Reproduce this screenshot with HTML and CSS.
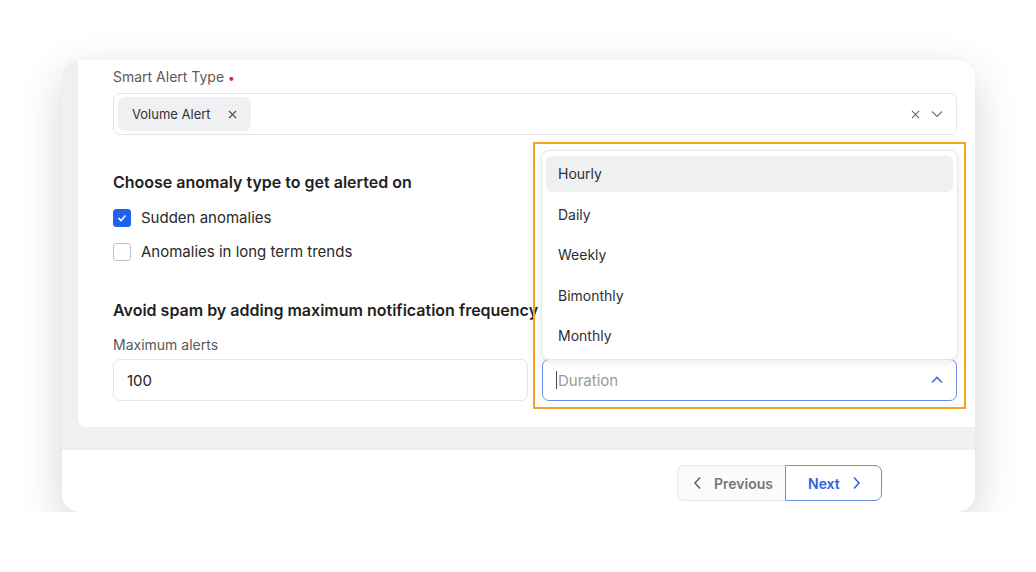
FILE: index.html
```html
<!DOCTYPE html>
<html lang="en">
<head>
    <meta charset="UTF-8">
    <meta name="viewport" content="width=device-width, initial-scale=1.0">
    <title>Smart Alert</title>
    <link rel="stylesheet" href="styles.css">
</head>
<body>
    <div class="frame">
        <div class="panel">
            <div class="field-label">Smart Alert Type <span class="required">&bull;</span></div>
            <div class="select">
                <span class="chip">Volume Alert
                    <svg width="9" height="9" viewBox="0 0 10 10"><path d="M1 1l8 8M9 1L1 9" stroke="#444" stroke-width="1.3" fill="none"/></svg>
                </span>
                <span class="select-icons">
                    <svg width="9" height="9" viewBox="0 0 10 10"><path d="M1 1l8 8M9 1L1 9" stroke="#666" stroke-width="1.2" fill="none"/></svg>
                    <svg width="12" height="8" viewBox="0 0 12 8"><path d="M1 1.5l5 5 5-5" stroke="#777" stroke-width="1.2" fill="none"/></svg>
                </span>
            </div>

            <h2 class="section-title first">Choose anomaly type to get alerted on</h2>
            <div class="checks">
                <label class="check">
                    <span class="box checked">
                        <svg width="10" height="8" viewBox="0 0 10 8"><path d="M1.5 4l2.5 2.5 4.5-5" stroke="#fff" stroke-width="1.6" fill="none"/></svg>
                    </span>
                    Sudden anomalies
                </label>
                <label class="check">
                    <span class="box"></span>
                    Anomalies in long term trends
                </label>
            </div>

            <h2 class="section-title">Avoid spam by adding maximum notification frequency</h2>
            <div class="field-label">Maximum alerts</div>
            <div class="input-row">
                <div class="input">100</div>
                <div class="input active">
                    <span class="caret"></span><span class="placeholder">Duration</span>
                    <svg class="up" width="12" height="8" viewBox="0 0 12 8"><path d="M1 6.5l5-5 5 5" stroke="#3f6fe0" stroke-width="1.6" fill="none"/></svg>
                </div>
            </div>

            <ul class="menu">
                <li class="hover">Hourly</li>
                <li>Daily</li>
                <li>Weekly</li>
                <li>Bimonthly</li>
                <li>Monthly</li>
            </ul>
            <div class="highlight"></div>
        </div>

        <div class="footer">
            <div class="pager">
                <button class="btn prev">
                    <svg width="9" height="14" viewBox="0 0 9 14"><path d="M7 1.5L2 7l5 5.5" stroke="#666" stroke-width="1.6" fill="none"/></svg>
                    Previous
                </button>
                <button class="btn next">
                    Next
                    <svg width="9" height="14" viewBox="0 0 9 14"><path d="M2 1.5L7 7l-5 5.5" stroke="#2f66e0" stroke-width="1.6" fill="none"/></svg>
                </button>
            </div>
        </div>
    </div>
</body>
</html>
```

FILE: styles.css
```css
body {
    margin: 0;
    background: #ffffff;
    font-family: 'Inter', 'Liberation Sans', sans-serif;
    color: #2a2a2a;
}

.frame {
    margin: 60px 0 0 62px;
    width: 913px;
    height: 452px;
    border-radius: 18px;
    overflow: hidden;
    background: #eff0f1;
    box-shadow: 0 14px 44px rgba(0, 0, 0, 0.17);
    display: flex;
    flex-direction: column;
}

.panel {
    position: relative;
    margin-left: 16px;
    height: 367px;
    box-sizing: border-box;
    padding: 8px 18px 0 35px;
    background: #ffffff;
    border-bottom-left-radius: 8px;
}

.field-label {
    font-size: 14px;
    line-height: 18px;
    color: #5a5a5a;
}

.required {
    color: #d6204b;
    font-size: 12px;
}

.select {
    margin-top: 6px;
    height: 42px;
    box-sizing: border-box;
    border: 1px solid #e4e5e6;
    border-radius: 7px;
    display: flex;
    align-items: center;
    justify-content: space-between;
    padding: 0 13px 0 4px;
}

.chip {
    display: flex;
    align-items: center;
    gap: 17px;
    height: 34px;
    padding: 0 14px;
    background: #eef0f1;
    border-radius: 7px;
    font-size: 13px;
    color: #333;
}

.select-icons {
    display: flex;
    align-items: center;
    gap: 11px;
}

.section-title {
    margin: 39px 0 0;
    font-size: 16px;
    line-height: 20px;
    font-weight: 600;
    color: #1f1f1f;
    white-space: nowrap;
}

.section-title.first {
    margin-top: 37px;
}

.checks {
    margin-top: 17px;
    display: flex;
    flex-direction: column;
    gap: 16px;
}

.check {
    display: flex;
    align-items: center;
    gap: 10px;
    font-size: 15px;
    line-height: 18px;
    color: #2a2a2a;
}

.box {
    width: 18px;
    height: 18px;
    box-sizing: border-box;
    border: 1px solid #bfc2c5;
    border-radius: 3px;
    display: flex;
    align-items: center;
    justify-content: center;
}

.box.checked {
    background: #1d63f0;
    border-color: #1d63f0;
}

.section-title + .field-label {
    margin-top: 16px;
}

.input-row {
    margin-top: 5px;
    display: flex;
    gap: 14px;
}

.input {
    flex: 1;
    height: 42px;
    box-sizing: border-box;
    border: 1px solid #e4e5e6;
    border-radius: 7px;
    display: flex;
    align-items: center;
    padding: 0 13px;
    font-size: 15px;
    color: #222;
}

.input.active {
    border-color: #6b8fe6;
    position: relative;
}

.caret {
    width: 1px;
    height: 18px;
    background: #444;
    margin-right: 1px;
}

.placeholder {
    color: #9a9a9a;
}

.up {
    margin-left: auto;
}

.menu {
    position: absolute;
    left: 463px;
    top: 90px;
    width: 417px;
    margin: 0;
    padding: 5px 4px;
    box-sizing: border-box;
    list-style: none;
    background: #ffffff;
    border: 1px solid #e6e7e8;
    border-radius: 8px;
    box-shadow: 0 2px 8px rgba(0, 0, 0, 0.08);
    display: flex;
    flex-direction: column;
    gap: 4.5px;
}

.menu li {
    height: 36px;
    line-height: 36px;
    padding-left: 12px;
    border-radius: 6px;
    font-size: 14px;
    color: #2e2e2e;
}

.menu li.hover {
    background: #eef0f1;
}

.highlight {
    position: absolute;
    left: 455px;
    top: 82px;
    width: 433px;
    height: 267px;
    box-sizing: border-box;
    border: 2px solid #f5a21f;
    pointer-events: none;
}

.footer {
    margin-top: 23px;
    flex: 1;
    background: #ffffff;
    display: flex;
    justify-content: flex-end;
    padding: 15px 93px 0 0;
}

.pager {
    display: flex;
    height: 36px;
}

.btn {
    font-family: inherit;
    font-size: 14px;
    font-weight: 600;
    display: flex;
    align-items: center;
    gap: 12px;
    background: #fbfbfb;
    border: 1px solid #e6e7e8;
    cursor: pointer;
}

.btn.prev {
    width: 108px;
    padding-left: 15px;
    color: #767676;
    border-radius: 7px 0 0 7px;
    border-right: none;
}

.btn.next {
    width: 97px;
    padding-left: 22px;
    color: #2f66e0;
    background: #ffffff;
    border-color: #6b8fe6;
    border-radius: 0 7px 7px 0;
}
```
